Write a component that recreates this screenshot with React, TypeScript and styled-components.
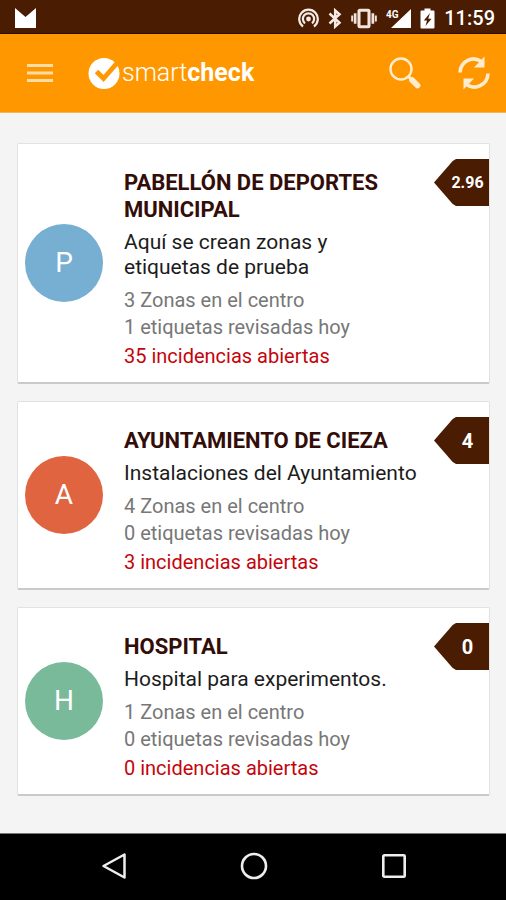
import React from "react";
import styled, { createGlobalStyle } from "styled-components";

const GlobalStyle = createGlobalStyle`
  * { box-sizing: border-box; }
  body {
    margin: 0;
    background: #f4f4f4;
    font-family: Roboto, "Liberation Sans", sans-serif;
  }
`;

const Screen = styled.div`
  display: flex;
  flex-direction: column;
  min-height: 100vh;
`;

const StatusBar = styled.div`
  display: flex;
  align-items: center;
  justify-content: space-between;
  height: 34px;
  padding: 3px 11px 0 15px;
  background: #4a1c02;
  border-bottom: 1px solid #2a0c00;
  color: #fff;
`;

const StatusIcons = styled.div`
  display: flex;
  align-items: center;
  gap: 9px;

  svg { display: block; }
`;

const Clock = styled.time`
  font-size: 20px;
  line-height: 24px;
  font-weight: 500;
`;

const AppBar = styled.header`
  display: flex;
  align-items: center;
  height: 79px;
  padding: 0 14px 0 24px;
  background: #ff9800;
  border-bottom: 1px solid #f3b65c;
`;

const IconButton = styled.button`
  display: flex;
  align-items: center;
  justify-content: center;
  padding: 0;
  border: 0;
  background: none;
  color: inherit;
  cursor: pointer;
`;

const Brand = styled.h1`
  display: flex;
  flex: 1;
  align-items: center;
  gap: 2px;
  margin: 0 0 0 32px;
  color: #fff;
  font-size: 25px;
  line-height: 32px;
  font-weight: 300;

  b { font-weight: 700; }
`;

const Actions = styled.div`
  display: flex;
  align-items: center;
  gap: 34px;
  color: #ffeccf;
`;

const CardList = styled.main`
  display: flex;
  flex: 1;
  flex-direction: column;
  gap: 17px;
  padding: 30px 16px 36px 17px;
`;

const Card = styled.article`
  display: grid;
  grid-template-columns: 78px 1fr 55px;
  column-gap: 21px;
  padding-left: 7px;
  background: #fff;
  border: 1px solid #e2e2e2;
  border-bottom: 2px solid #c9cbca;
  border-radius: 2px;
`;

const Avatar = styled.div<{ $color: string }>`
  display: flex;
  align-items: center;
  justify-content: center;
  align-self: center;
  width: 78px;
  height: 78px;
  border-radius: 50%;
  background: ${(p) => p.$color};
  color: #fff;
  font-size: 28px;
  line-height: 32px;
`;

const Info = styled.div`
  padding: 25px 0 12px;
  margin-right: -12px;
`;

const Title = styled.h2`
  margin: 0 0 7px;
  color: #330d08;
  font-size: 22px;
  line-height: 27px;
  font-weight: 700;
`;

const Description = styled.p`
  margin: 0 0 7px;
  color: #1c1c1c;
  font-size: 21px;
  line-height: 25px;
  white-space: pre-line;
`;

const Detail = styled.p`
  margin: 0;
  color: #777;
  font-size: 20px;
  line-height: 27px;
`;

const Incidents = styled(Detail)`
  margin-top: 2px;
  color: #c4050c;
`;

const Tag = styled.div<{ $small: boolean }>`
  display: flex;
  align-items: center;
  justify-content: center;
  height: 47px;
  margin-top: 15px;
  padding-left: 12px;
  background: #4a1c02;
  clip-path: polygon(0 50%, 34% 4%, 40% 0, 100% 0, 100% 100%, 40% 100%, 34% 96%);
  color: #fff;
  font-size: ${(p) => (p.$small ? 16 : 20)}px;
  line-height: 24px;
  font-weight: 700;
`;

const NavBar = styled.nav`
  display: flex;
  align-items: center;
  justify-content: center;
  gap: 100px;
  height: 67px;
  padding: 0 0 2px 2px;
  background: #000;
  border-top: 1px solid #777;
  color: #eee;
`;

const NavButton = styled(IconButton)`
  width: 40px;
  height: 40px;
`;

interface Centre {
  name: string;
  description: string;
  zones: number;
  reviewed: number;
  incidents: number;
  score: string;
  color: string;
}

const centres: Centre[] = [
  { name: "PABELLÓN DE DEPORTES MUNICIPAL", description: "Aquí se crean zonas y\netiquetas de prueba", zones: 3, reviewed: 1, incidents: 35, score: "2.96", color: "#76afd2" },
  { name: "AYUNTAMIENTO DE CIEZA", description: "Instalaciones del Ayuntamiento", zones: 4, reviewed: 0, incidents: 3, score: "4", color: "#e06440" },
  { name: "HOSPITAL", description: "Hospital para experimentos.", zones: 1, reviewed: 0, incidents: 0, score: "0", color: "#78ba9a" },
];

function CentreCard({ centre }: { centre: Centre }) {
  return (
    <Card>
      <Avatar $color={centre.color}>{centre.name[0]}</Avatar>
      <Info>
        <Title>{centre.name}</Title>
        <Description>{centre.description}</Description>
        <Detail>{centre.zones} Zonas en el centro</Detail>
        <Detail>{centre.reviewed} etiquetas revisadas hoy</Detail>
        <Incidents>{centre.incidents} incidencias abiertas</Incidents>
      </Info>
      <Tag $small={centre.score.length > 2}>{centre.score}</Tag>
    </Card>
  );
}

function CastIcon() {
  return (
    <svg width="21" height="21" viewBox="0 0 21 21" fill="none" stroke="#f5ebe5" strokeWidth="2.2">
      <path d="M5 18.5a9.3 9.3 0 1 1 11 0" />
      <path d="M7 15.300a5.600 5.600 0 1 1 7 0" />
      <circle cx="10.5" cy="11" r="2.400" fill="#f5ebe5" stroke="none" />
    </svg>
  );
}

function BluetoothIcon() {
  return (
    <svg width="14" height="21" viewBox="0 0 14 21" fill="none" stroke="#f5ebe5" strokeWidth="2.500">
      <path d="M1.500 5.500 11.500 14.800 7.200 18.500V2.500L11.500 6.200 1.500 15.500" />
    </svg>
  );
}

function VibrateIcon() {
  return (
    <svg width="26" height="21" viewBox="0 0 27 21" fill="none" stroke="#f0e4dc">
      <rect x="8.300" y="2" width="10.400" height="17" rx="1" strokeWidth="3.200" />
      <path d="M4.300 5v11M22.700 5v11" strokeWidth="2.800" />
      <path d="M1.200 7.500v6M25.800 7.500v6" strokeWidth="2" />
    </svg>
  );
}

function SignalIcon() {
  return (
    <svg width="25" height="21" viewBox="0 0 25 21" fill="#fff">
      <path d="M25 1v19H5z" />
      <text x="0" y="10" fontSize="10" fontWeight="700" fill="#fff" stroke="#4a1c02" strokeWidth="2" paintOrder="stroke">4G</text>
    </svg>
  );
}

function BatteryIcon() {
  return (
    <svg width="15" height="21" viewBox="0 0 15 21">
      <path d="M1.500 2.500H4.500V.5h6v2h3a1 1 0 0 1 1 1v16a1 1 0 0 1-1 1h-12a1 1 0 0 1-1-1v-16a1 1 0 0 1 1-1z" fill="#fff" />
      <path d="M10 5 3.800 12.500h3.200L5.500 18l6-7.300H8.200z" fill="#4a1c02" />
    </svg>
  );
}

export default function App() {
  return (
    <>
      <GlobalStyle />
      <Screen>
        <StatusBar>
          <svg width="21" height="20" viewBox="0 0 21 20" fill="#fff">
            <path d="M0 0 10.500 9 21 0v20H0z" />
          </svg>
          <StatusIcons>
            <CastIcon />
            <BluetoothIcon />
            <VibrateIcon />
            <SignalIcon />
            <BatteryIcon />
            <Clock>11:59</Clock>
          </StatusIcons>
        </StatusBar>

        <AppBar>
          <IconButton type="button" aria-label="Menú">
            <svg width="32" height="32" viewBox="0 0 32 32" stroke="#ffdca8" strokeWidth="3">
              <path d="M3 8.500h26M3 16h26M3 23.500h26" />
            </svg>
          </IconButton>
          <Brand>
            <svg width="32" height="32" viewBox="0 0 32 32" fill="none">
              <circle cx="16" cy="16.500" r="15.500" fill="#fff" />
              <path d="M8.500 14.500 15.500 21.500 29.500 5.500" stroke="#ff9800" strokeWidth="4.800" />
            </svg>
            <span>smart<b>check</b></span>
          </Brand>
          <Actions>
            <IconButton type="button" aria-label="Buscar">
              <svg width="34" height="34" viewBox="0 0 34 34" fill="none" stroke="currentColor">
                <circle cx="13" cy="13" r="10.500" strokeWidth="2.400" />
                <path d="M20.500 20.500 24 24" strokeWidth="3" />
                <path d="M24 24 29.500 29.500" strokeWidth="5.800" strokeLinecap="round" />
              </svg>
            </IconButton>
            <IconButton type="button" aria-label="Actualizar">
              <svg width="36" height="36" viewBox="0 0 36 36" fill="none" stroke="currentColor" strokeWidth="3.600">
                <path d="M4 17.500C4.500 6 17 0 26 7" />
                <path d="M32 18.500C31.500 30 19 36 10 29" />
                <path d="M28.500 1.500v11H18z" fill="currentColor" stroke="none" />
                <path d="M7.500 34.500v-11H18z" fill="currentColor" stroke="none" />
              </svg>
            </IconButton>
          </Actions>
        </AppBar>

        <CardList>
          {centres.map((centre) => (
            <CentreCard key={centre.name} centre={centre} />
          ))}
        </CardList>

        <NavBar>
          <NavButton type="button" aria-label="Atrás">
            <svg width="28" height="28" viewBox="0 0 28 28" fill="none" stroke="currentColor" strokeWidth="2.500" strokeLinejoin="round">
              <path d="M24.500 2.500v23L3.500 14z" />
            </svg>
          </NavButton>
          <NavButton type="button" aria-label="Inicio">
            <svg width="28" height="28" viewBox="0 0 28 28" fill="none" stroke="currentColor" strokeWidth="2.600">
              <circle cx="14" cy="14" r="12" />
            </svg>
          </NavButton>
          <NavButton type="button" aria-label="Recientes">
            <svg width="28" height="28" viewBox="0 0 28 28" fill="none" stroke="currentColor" strokeWidth="2.600">
              <rect x="3.300" y="3.300" width="21.400" height="21.400" rx="1" />
            </svg>
          </NavButton>
        </NavBar>
      </Screen>
    </>
  );
}
